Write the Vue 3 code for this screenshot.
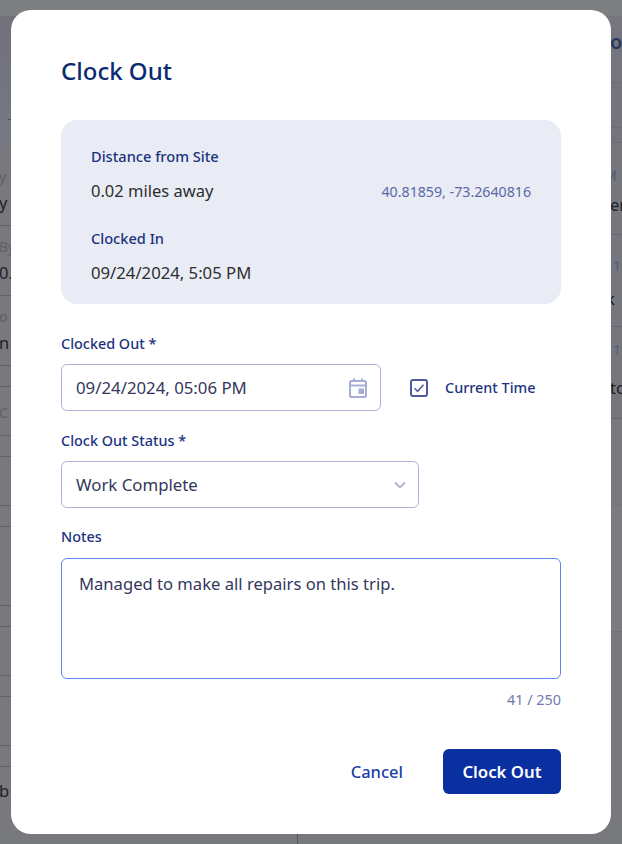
<script setup>
const leftRows = [
  { h: 80, pad: 22, label: 'y *', value: 'y' },
  { h: 70, pad: 12, label: 'By', value: '0.' },
  { h: 70, pad: 12, label: 'o', value: 'n T' },
  { h: 21 },
  { h: 49, pad: 17, label: 'C' },
  { h: 21 },
  { h: 49 },
  { h: 21 },
  { h: 79 },
  { h: 21 },
  { h: 49 },
  { h: 21 },
  { h: 49 },
  { h: 21 },
]
const rightRows = [
  { pad: 24, gap: 9, label: 'M', value: 'er', labelX: 306, valueX: 312 },
  { pad: 22, gap: 13, label: '1:', value: 'k', labelX: 315, valueX: 308 },
  { pad: 14, gap: 18, label: '1:', value: 'to', labelX: 315, valueX: 312 },
]
</script>

<template>
  <div class="page">
    <div class="band"></div>
    <div class="columns">
      <section class="col col-left">
        <div class="left-head"><span class="tick"></span></div>
        <div
          v-for="(r, i) in leftRows"
          :key="i"
          class="row"
          :style="{ height: r.h + 'px', paddingTop: (r.pad || 0) + 'px' }"
        >
          <span v-if="r.label" class="bg-label">{{ r.label }}</span>
          <span v-if="r.value" class="bg-value">{{ r.value }}</span>
        </div>
        <div class="bg-value last">b</div>
      </section>
      <section class="col col-right">
        <div class="right-head"><span class="bg-title">oc</span></div>
        <div class="right-tabs"></div>
        <div class="right-gap"></div>
        <div
          v-for="(r, i) in rightRows"
          :key="i"
          class="row row-r"
          :style="{ paddingTop: r.pad + 'px' }"
        >
          <span class="bg-label" :style="{ marginLeft: r.labelX + 'px' }">{{ r.label }}</span>
          <span class="bg-value" :style="{ marginLeft: r.valueX + 'px', marginTop: r.gap + 'px' }">{{ r.value }}</span>
        </div>
        <div class="right-empty"></div>
        <div class="right-light"></div>
      </section>
    </div>

    <div class="modal">
      <h1 class="title">Clock Out</h1>

      <div class="info">
        <div class="info-label">Distance from Site</div>
        <div class="info-line">
          <span class="info-value">0.02 miles away</span>
          <span class="coords">40.81859, -73.2640816</span>
        </div>
        <div class="info-label second">Clocked In</div>
        <div class="info-value lower">09/24/2024, 5:05 PM</div>
      </div>

      <label class="field-label first">Clocked Out *</label>
      <div class="time-row">
        <div class="input date">
          <span>09/24/2024, 05:06 PM</span>
          <svg class="cal" width="18" height="20" viewBox="0 0 18 20" fill="none">
            <path d="M2.800 3h12.400A1.800 1.800 0 0 1 17 4.800v12.400a1.800 1.800 0 0 1-1.800 1.800H2.800A1.800 1.800 0 0 1 1 17.200V4.800A1.800 1.800 0 0 1 2.800 3Z" stroke="#a7aed6" stroke-width="2"/>
            <path d="M1 7.500h16" stroke="#a7aed6" stroke-width="2"/>
            <path d="M5 0.500v3.500M13 0.500v3.500" stroke="#a7aed6" stroke-width="2"/>
            <rect x="9.500" y="10.500" width="5.500" height="5.500" fill="#a7aed6"/>
          </svg>
        </div>
        <div class="check-wrap">
          <svg width="18" height="18" viewBox="0 0 18 18" fill="none">
            <rect x="1" y="1" width="16" height="16" rx="2" stroke="#4f5a9d" stroke-width="2"/>
            <path d="M4.500 9.300 7.600 12.300 13.500 5.800" stroke="#4f5a9d" stroke-width="1.500"/>
          </svg>
          <span class="check-label">Current Time</span>
        </div>
      </div>

      <label class="field-label status-label">Clock Out Status *</label>
      <div class="input status">
        <span>Work Complete</span>
        <svg width="12" height="8" viewBox="0 0 12 8" fill="none">
          <path d="M1 1.500 6 6.300 11 1.500" stroke="#a7aed6" stroke-width="1.800"/>
        </svg>
      </div>

      <label class="field-label notes-label">Notes</label>
      <div class="notes">Managed to make all repairs on this trip.</div>
      <div class="counter">41 / 250</div>

      <div class="actions">
        <button class="cancel" type="button">Cancel</button>
        <button class="submit" type="button">Clock Out</button>
      </div>
    </div>
  </div>
</template>

<style>
html, body { margin: 0; padding: 0; }
</style>

<style scoped>
.page {
  position: relative;
  width: 622px;
  height: 844px;
  overflow: hidden;
  background: #78797d;
  font-family: "Noto Sans", "Open Sans", sans-serif;
}
.band { height: 16px; background: #7e7f81; }
.columns { display: flex; height: 828px; }
.col { box-sizing: border-box; overflow: hidden; }
.col-left { width: 298px; border-right: 1px solid #55565a; }
.col-right { flex: 1; }

.left-head { position: relative; height: 130px; background: linear-gradient(#70717a, #767884); }
.tick { position: absolute; left: 8px; top: 103px; width: 3px; height: 1px; background: #4c4d55; }

.row {
  box-sizing: border-box;
  border-bottom: 1px solid #606165;
  white-space: nowrap;
  display: flex;
  flex-direction: column;
}
.bg-label { font-size: 14px; line-height: 18px; color: #5f6064; }
.bg-value { font-size: 16.500px; line-height: 22px; margin-top: 6px; color: #1f2024; }
.col-left .bg-label, .col-left .bg-value { margin-left: -1px; }
.last { margin-top: 13px; }

.right-head { height: 66px; border-bottom: 1px solid #6a6c76; position: relative; background: #75767d; }
.bg-title { position: absolute; left: 312px; top: 14px; font-size: 20px; line-height: 24px; font-weight: 600; color: #2b3763; }
.right-tabs { height: 44px; border-bottom: 1px solid #6a6c76; background: #74757c; }
.right-gap { height: 14px; border-bottom: 1px solid #6a6c76; background: #74757c; }
.row-r { height: 92px; border-bottom-color: #66687a; background: #76777d; }
.row-r .bg-label { color: #525a78; }
.right-empty { height: 87px; background: #787a7d; border-bottom: 1px solid #737478; box-sizing: border-box; }
.right-light { height: 126px; background: #7b7c7f; border-bottom: 1px solid #727376; box-sizing: border-box; }

.modal {
  position: absolute;
  left: 11px;
  top: 10px;
  box-sizing: border-box;
  width: 600px;
  height: 824px;
  padding: 46px 50px 0;
  background: #fff;
  border-radius: 20px;
}
.title {
  margin: 0;
  font-size: 24px;
  line-height: 30px;
  font-weight: 500;
  color: #0b2a72;
}
.info {
  box-sizing: border-box;
  height: 184px;
  margin-top: 34px;
  padding: 26px 30px 0;
  background: #e9ecf4;
  border-radius: 16px;
}
.info-label { font-size: 14.600px; line-height: 20px; font-weight: 500; color: #1c337f; }
.field-label, .check-label { font-size: 14.400px; line-height: 20px; font-weight: 500; color: #1c337f; }
.info-label.second { margin-top: 25px; }
.info-line { display: flex; justify-content: space-between; align-items: center; margin-top: 13px; height: 24px; }
.info-value { font-size: 16.500px; line-height: 24px; color: #2e2e2e; }
.info-value.lower { margin-top: 13px; font-size: 16.700px; }
.coords { font-size: 14.200px; color: #5b67a8; }

.field-label { display: block; }
.field-label.first { margin-top: 30px; }
.status-label { margin-top: 20px; }
.notes-label { margin-top: 19px; }

.time-row { display: flex; align-items: center; margin-top: 10px; }
.input {
  box-sizing: border-box;
  display: flex;
  align-items: center;
  justify-content: space-between;
  height: 47px;
  padding: 0 13px 0 14px;
  font-size: 16.800px;
  color: #33385c;
  border: 1px solid #aab1d8;
  border-radius: 6px;
  background: #fff;
}
.date { width: 320px; }
.status { width: 358px; margin-top: 10px; padding-right: 12px; }
.check-wrap { display: flex; align-items: center; margin-left: 29px; gap: 17px; }

.notes {
  box-sizing: border-box;
  height: 121px;
  margin-top: 11px;
  padding: 13px 17px;
  font-size: 16.600px;
  line-height: 24px;
  color: #33385c;
  border: 1px solid #5b86f0;
  border-radius: 6px;
}
.counter { margin-top: 11px; text-align: right; font-size: 14.400px; line-height: 20px; color: #717ab1; }

.actions { display: flex; justify-content: flex-end; align-items: center; margin-top: 39px; }
button { font-family: inherit; border: 0; cursor: pointer; }
.cancel { padding: 0; margin-right: 40px; background: none; font-size: 16.500px; font-weight: 500; color: #1c3fa8; }
.submit {
  width: 118px;
  height: 45px;
  background: #0a2fa0;
  border-radius: 6px;
  color: #fff;
  font-size: 16.800px;
  font-weight: 600;
}
</style>
